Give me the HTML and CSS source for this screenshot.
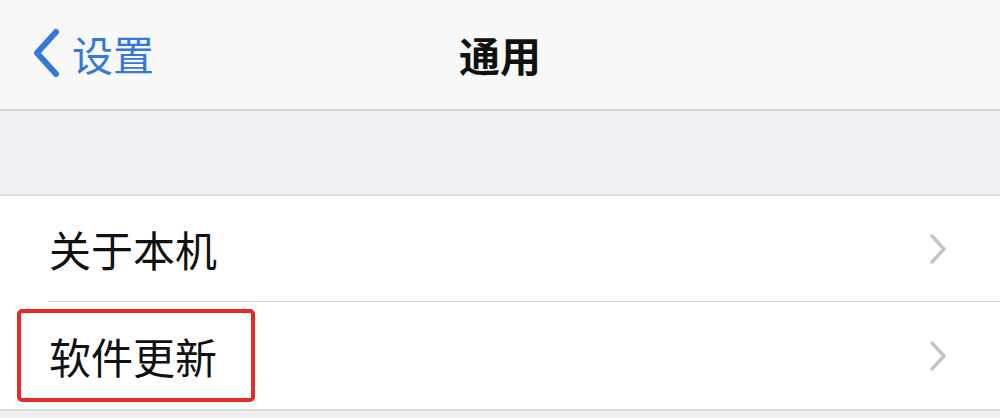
FILE: index.html
```html
<!DOCTYPE html>
<html lang="zh-CN">
<head>
<meta charset="utf-8">
<link rel="stylesheet" href="styles.css">
</head>
<body>
<div class="page">
  <header class="nav">
    <div class="back">
      <svg class="back-icon" width="30" height="50" viewBox="0 0 30 50">
        <path d="M25 4 L6 25 L25 46" fill="none" stroke="#3478d8" stroke-width="6" stroke-linecap="round" stroke-linejoin="round"/>
      </svg>
      <span class="back-label">设置</span>
    </div>
    <div class="title">通用</div>
  </header>
  <div class="spacer"></div>
  <ul class="list">
    <li class="row">
      <div class="row-inner">
        <span class="label">关于本机</span>
        <svg class="chev" width="20" height="32" viewBox="0 0 20 32"><path d="M4 3 L16 16 L4 29" fill="none" stroke="#c4c4c8" stroke-width="3.5" stroke-linecap="round" stroke-linejoin="round"/></svg>
      </div>
    </li>
    <li class="row">
      <div class="row-inner last">
        <span class="label">软件更新</span>
        <svg class="chev" width="20" height="32" viewBox="0 0 20 32"><path d="M4 3 L16 16 L4 29" fill="none" stroke="#c4c4c8" stroke-width="3.5" stroke-linecap="round" stroke-linejoin="round"/></svg>
      </div>
      <div class="highlight"></div>
    </li>
  </ul>
</div>
</body>
</html>
```

FILE: styles.css
```css
* { box-sizing: border-box; }
html, body { margin: 0; padding: 0; }
body {
  width: 1000px;
  height: 418px;
  overflow: hidden;
  background: #efeff4;
  font-family: "Noto Sans CJK SC", "Noto Sans", sans-serif;
}
.page { display: flex; flex-direction: column; }
.nav {
  position: relative;
  height: 111px;
  background: #f8f8f8;
  border-bottom: 2px solid #d8d8da;
  display: flex;
  align-items: center;
}
.back {
  display: flex;
  align-items: center;
  padding-left: 31px;
  gap: 11px;
  padding-bottom: 4px;
}
.back-icon { display: block; }
.back-label {
  color: #3478d8;
  font-size: 41px;
  line-height: 50px;
}
.title {
  position: absolute;
  left: 0;
  right: 0;
  top: 26px;
  text-align: center;
  font-size: 41px;
  line-height: 56px;
  font-weight: 600;
  color: #111;
}
.spacer {
  height: 85px;
  border-bottom: 2px solid #dcdcde;
}
.list {
  list-style: none;
  margin: 0;
  padding: 0;
  background: #fff;
  border-bottom: 2px solid #dcdcde;
}
.row { position: relative; padding-left: 48px; }
.row-inner {
  height: 106px;
  display: flex;
  align-items: center;
  justify-content: space-between;
  padding-right: 52px;
  border-bottom: 1px solid #d6d6d8;
}
.row-inner.last { border-bottom: none; height: 107px; }
.label {
  font-size: 42px;
  line-height: 50px;
  color: #111;
  margin-left: 1px;
}
.chev { display: block; }
.highlight {
  position: absolute;
  left: 17px;
  top: 7px;
  width: 238px;
  height: 93px;
  border: 4px solid #e82a24;
  border-radius: 5px;
}
```
